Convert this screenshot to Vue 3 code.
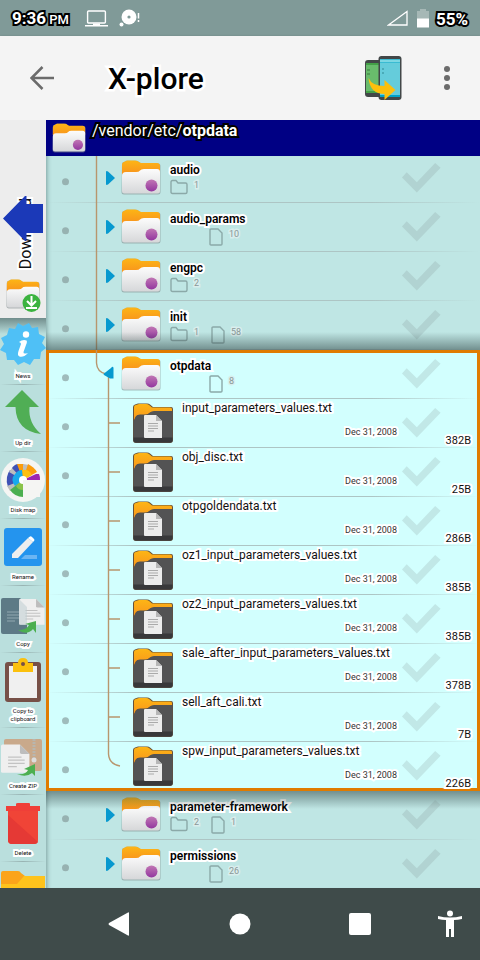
<script setup>
import { reactive } from 'vue'

const before = [
  { name: 'audio', dirs: 1 },
  { name: 'audio_params', files: 10 },
  { name: 'engpc', dirs: 2 },
  { name: 'init', dirs: 1, files: 58 },
]
const current = { name: 'otpdata', files: 8 }
const after = [
  { name: 'parameter-framework', dirs: 2, files: 1 },
  { name: 'permissions', files: 26 },
]
const files = [
  { name: 'input_parameters_values.txt', size: '382B' },
  { name: 'obj_disc.txt', size: '25B' },
  { name: 'otpgoldendata.txt', size: '286B' },
  { name: 'oz1_input_parameters_values.txt', size: '385B' },
  { name: 'oz2_input_parameters_values.txt', size: '385B' },
  { name: 'sale_after_input_parameters_values.txt', size: '378B' },
  { name: 'sell_aft_cali.txt', size: '7B' },
  { name: 'spw_input_parameters_values.txt', size: '226B' },
]
const sections = [
  { key: 'before', rows: before.map((r) => ({ ...r, kind: 'dir', line: true })) },
  {
    key: 'open',
    rows: [
      { ...current, kind: 'dir', open: true },
      ...files.map((f, i) => ({ ...f, kind: 'file', date: 'Dec 31, 2008', last: i === files.length - 1 })),
    ],
  },
  { key: 'after', rows: after.map((r) => ({ ...r, kind: 'dir' })) },
]
const marked = reactive({})
</script>

<template>
  <div class="app">
    <svg class="defs" width="0" height="0" aria-hidden="true">
      <defs>
        <linearGradient id="gOrange" x1="0" y1="0" x2="0" y2="1">
          <stop offset="0" stop-color="#fdb515" /><stop offset="1" stop-color="#f8941d" />
        </linearGradient>
        <linearGradient id="gPaper" x1="0" y1="0" x2="0" y2="1">
          <stop offset="0" stop-color="#fcfcfc" /><stop offset="1" stop-color="#d6d7d9" />
        </linearGradient>
        <linearGradient id="gPurple" x1="0" y1="0" x2="0" y2="1">
          <stop offset="0" stop-color="#c177b4" /><stop offset="1" stop-color="#93369f" />
        </linearGradient>
        <symbol id="folder" viewBox="0 0 40 35">
          <path d="M1 4Q1 2 3 2L5 0.8H15Q17 0.8 18 2L20 3.500H37Q39.500 3.500 39.500 6V32Q39.500 34.500 37 34.500H3Q.5 34.500 .5 32Z" fill="#7c8788" opacity=".55" />
          <path d="M1 5Q1 2 4 1.500L6 .5H14Q17 .5 18 2L20 3H36Q39 3 39 6V14H1Z" fill="url(#gOrange)" />
          <path d="M1 16Q1 12 5 12H15Q18 12 19 10.500Q20 9 23 9H36Q39 9 39 12V31Q39 33.500 36.500 33.500H3.500Q1 33.500 1 31Z" fill="url(#gPaper)" />
        </symbol>
        <symbol id="folder-dot" viewBox="0 0 40 35">
          <use href="#folder" width="40" height="35" />
          <circle cx="30.500" cy="25.500" r="6" fill="url(#gPurple)" />
        </symbol>
        <symbol id="file" viewBox="0 0 40 40">
          <path d="M0 4Q0 2 2 1.500L5 .5H14Q16 .5 17 1.500L20 4H38Q40 4 40 6V37Q40 40 37 40H3Q0 40 0 37Z" fill="#67513a" />
          <path d="M1 4Q1 2 3 2L6 1H13Q15 1 16 2L19 4.500H37Q39 4.500 39 6V9H19Q17 9 15.500 10.500T11 12H6Q3 12 2 15L1 18Z" fill="url(#gOrange)" />
          <path d="M.5 18L3 13.500Q4 11.500 7 11.500H13Q15.500 11.500 17 9.500Q18.500 8 21 8H39.500V37Q39.500 39.500 37 39.500H3Q.5 39.500 .5 37Z" fill="#535354" />
          <path d="M.5 34.500H39.500V37Q39.500 39.500 37 39.500H3Q.5 39.500 .5 37Z" fill="#38383a" />
          <path d="M12 12H23L29 18V35H12Q11 35 11 34V13Q11 12 12 12Z" fill="#ececec" />
          <path d="M23 12L29 18H23Z" fill="#b7b7b7" />
          <path d="M15 20.500H25M15 23H25M15 25.500H25M15 28H21" stroke="#aaa" stroke-width="1" />
        </symbol>
        <symbol id="doc" viewBox="0 0 38 42">
          <path d="M2 0H24L36 12V36H2Q0 36 0 34V2Q0 0 2 0Z" fill="#efefef" />
          <path d="M24 0L36 12H26Q24 12 24 10Z" fill="#bdbdbd" />
          <path d="M9 16H26M9 20H30M9 24H30M9 28H20" stroke="#c3c3c3" stroke-width="1.600" />
        </symbol>
      </defs>
    </svg>

    <header class="status">
      <span class="clock">9:36<small> PM</small></span>
      <svg class="laptop" viewBox="0 0 23 17" aria-hidden="true">
        <rect x="2.600" y="1" width="17.800" height="12" rx="1" fill="none" stroke="#fff" stroke-width="1.400" />
        <path d="M0 15H23V16.500H0ZM8 13.500H15V15H8Z" fill="#fff" />
      </svg>
      <svg class="disc" viewBox="0 0 22 18" aria-hidden="true">
        <circle cx="10" cy="8" r="7.500" fill="#fff" /><circle cx="10" cy="8" r="1.600" fill="#809a98" />
        <circle cx="2.500" cy="15.500" r="2" fill="#fff" />
        <path d="M19.500 4V9.500M19.500 11V13" stroke="#fff" stroke-width="1.500" />
      </svg>
      <span class="grow"></span>
      <svg class="signal" viewBox="0 0 21 16" aria-hidden="true"><path d="M1.500 15L20 1.500V15Z" fill="none" stroke="#fff" stroke-width="1.300" /></svg>
      <svg class="battery" viewBox="0 0 12 19" aria-hidden="true"><path d="M0 2H3V0H9V2H12V10H0Z" fill="#a6b8b6" /><path d="M0 9.500H12V18.500H0Z" fill="#fff" /></svg>
      <span class="percent">55%</span>
    </header>

    <div class="toolbar">
      <button class="plain back" aria-label="Back">
        <svg viewBox="0 0 24 24" width="24" height="24"><path d="M24 12H2M12.500 1L1.500 12L12.500 23" fill="none" stroke="#6b6b6b" stroke-width="2.500" /></svg>
      </button>
      <h1>X-plore</h1>
      <button class="plain" aria-label="Transfer">
        <svg viewBox="0 0 38 45" width="38" height="45">
          <rect x="1" y="4" width="20" height="37" rx="3" fill="#424748" />
          <path d="M2 7H21V37H2Z" fill="#69bc6c" /><path d="M2 7H21V9H2ZM2 35H21V37H2Z" fill="#43a047" />
          <path d="M3 13H6V15H3ZM3 17H6V19H3Z" fill="#519b54" />
          <rect x="14.500" y="0" width="23" height="44" rx="3" fill="#424748" />
          <path d="M16 3H36V41H16Z" fill="#65ccdb" /><path d="M16 3H36V7H16Z" fill="#3abbd2" /><path d="M16 4H36V6H16Z" fill="#7bd7e3" /><path d="M16 39H36V41H16Z" fill="#00a2c8" />
          <path d="M18 12H20V14H18ZM18 16H20V18H18Z" fill="#4aabb8" />
          <path d="M4.500 22Q8 30 20.500 30V24L31.500 34L20.500 44V38Q6 38 4.500 22Z" fill="#fcbf0d" />
        </svg>
      </button>
      <button class="plain more" aria-label="More options">
        <svg viewBox="0 0 6 24" width="6" height="24"><g fill="#6b6b6b"><circle cx="3" cy="3" r="3" /><circle cx="3" cy="12" r="3" /><circle cx="3" cy="21" r="3" /></g></svg>
      </button>
    </div>

    <div class="body">
      <aside class="side">
        <button class="plain tab">
          <span class="tab-label">Download</span>
          <svg class="tab-icon" viewBox="0 0 35 34">
            <use href="#folder" width="34" height="30" />
            <circle cx="25.500" cy="24" r="9" fill="#3bb33f" />
            <path d="M25.500 17V26M21 22L25.500 26.500L30 22M20 29H31" fill="none" stroke="#fff" stroke-width="2" />
          </svg>
          <svg class="arrow" viewBox="0 0 40 45"><path d="M0 22.500L22 0H23.500V8H40V37H23.500V45H22Z" fill="#1b39b8" /></svg>
        </button>
        <nav class="actions">
          <button class="plain action">
            <svg viewBox="0 0 46 46">
              <path d="M23 4L29 1L32 6L38 5L39 12L45 15L42 21L46 26L41 30L40 37L34 37L30 43L24 40L18 43L14 38L7 38L6 31L0 28L4 22L1 16L7 13L9 6L15 7L18 1Z" fill="#4fc0f6" />
              <circle cx="26" cy="12.500" r="3.200" fill="#fff" />
              <path d="M19 20Q23 17 26.500 18.500Q27.500 19.500 26 23L23.500 30Q23 32.500 28 31Q23 36 19.500 34.500Q17 33.500 18.500 29L21 22Q21 20.500 19 20Z" fill="#fff" />
            </svg>
            <span>News</span>
          </button>
          <button class="plain action">
            <svg viewBox="0 0 46 46"><path d="M22 1L39 18H29.500Q28 34 41 45Q16 42 15.500 18H5Z" fill="#50ae55" /></svg>
            <span>Up dir</span>
          </button>
          <button class="plain action">
            <svg viewBox="0 0 46 46">
              <circle cx="23" cy="24" r="22" fill="#f5f5f3" />
              <g transform="translate(0 1)">
                <path d="M23 23L7 20A16 16 0 0 1 10 13Z" fill="#3f51b5" /><path d="M23 23L9 15L13 10Z" fill="#bdbdbd" />
                <path d="M23 23L12 11Q15 7 18 7Z" fill="#3f51b5" /><path d="M23 23L17 7H24Z" fill="#fb9c0c" /><path d="M23 23L23 7L29 8Z" fill="#bdbdbd" />
                <path d="M23 23L28 7Q34 10 37 15Z" fill="#fb9c0c" /><path d="M23 23L36 17H39Q40 19 40 23Z" fill="#9c27b0" />
                <path d="M23 23L22 13Q29 12 32 18Z" fill="#fdc010" />
                <path d="M14 20L7 20Q6 25 8 30L15 26Z" fill="#3f51b5" /><path d="M23 23L7 29L10 34Z" fill="#bdbdbd" />
                <path d="M23 23L15 29Q10 22 15 17Q18 13 22 13Z" fill="#18a9ec" />
                <path d="M23 23L10 33Q15 40 23 40Z" fill="#4caf50" /><path d="M23 23L16 29Q18 33 23 33Z" fill="#8bc34a" />
                <circle cx="23" cy="23" r="4" fill="#fff" /><path d="M23 23H40V40H23Z" fill="#f5f5f3" />
              </g>
            </svg>
            <span>Disk map</span>
          </button>
          <button class="plain action">
            <svg viewBox="0 0 46 46">
              <rect x="4" y="5" width="38" height="38" rx="3" fill="#2494ee" />
              <path d="M12 31L28 15L33 19L18 35H12Z" fill="#eee" /><path d="M28 15L30 13.500Q31 13 32 14L34 16Q35 17 34 18L33 19Z" fill="#fff" />
              <path d="M25 32H37V36H21Z" fill="#6bb5f3" />
            </svg>
            <span>Rename</span>
          </button>
          <button class="plain action">
            <svg viewBox="0 0 46 46">
              <path d="M3 8H20L27 15V44H3Q1 44 1 42V10Q1 8 3 8Z" fill="#5d7a86" />
              <path d="M7 22H22M7 25H22M7 28H22M7 31H15" stroke="#91a7af" stroke-width="1.200" />
              <use href="#doc" x="19" y="3" width="27" height="42" /><path d="M19 9L27 17V35H19Z" fill="#bccbcf" opacity=".5" />
              <path d="M18 40Q27 40 29 35L25 34L36 31V43L33 39Q27 46 18 40Z" fill="#4caf50" />
            </svg>
            <span>Copy</span>
          </button>
          <button class="plain action">
            <svg viewBox="0 0 46 46">
              <rect x="5" y="5" width="36" height="40" rx="3" fill="#775047" /><path d="M9 9H37V41H9Z" fill="#f0f0f0" />
              <path d="M13 6H18Q18 1 23 1T28 6H33V15H13Z" fill="#fbc00d" /><circle cx="23" cy="7" r="2" fill="#775047" />
            </svg>
            <span>Copy to<br />clipboard</span>
          </button>
          <button class="plain action">
            <svg viewBox="0 0 46 46">
              <rect x="4" y="7" width="38" height="32" rx="2" fill="#c9a98b" /><path d="M34 7V26" stroke="#b9b6ae" stroke-width="3" stroke-dasharray="2 1" /><circle cx="34" cy="28" r="2.500" fill="#ddd" />
              <use href="#doc" x="1" y="9" width="30" height="40" />
              <path d="M17 42Q26 43 28 38L24 37L35 32V44L32 41Q26 46 17 42Z" fill="#4caf50" />
            </svg>
            <span>Create ZIP</span>
          </button>
          <button class="plain action">
            <svg viewBox="0 0 46 46"><path d="M8 12H38V41Q38 45 34 45H12Q8 45 8 41Z" fill="#f04437" /><path d="M8 16L38 43Q37 45 34 45H12Q8 45 8 41Z" fill="#e53935" /><path d="M6 7H16V5Q16 4 18 4H29Q30 4 30 5V7H40V12H6Z" fill="#ef3f38" /></svg>
            <span>Delete</span>
          </button>
          <button class="plain action" aria-label="New folder">
            <svg viewBox="0 0 46 46"><path d="M1 7Q1 5 3 5H18Q20 5 21 7L25 10V30H1Z" fill="#fba41a" /><path d="M1 18H17L24 10H45V40H1Z" fill="#fec31c" /></svg>
          </button>
        </nav>
      </aside>

      <main class="pane">
        <div class="path">
          <svg class="path-icon"><use href="#folder-dot" width="34" height="30" /></svg>
          <span>/vendor/etc/<b>otpdata</b></span>
        </div>
        <div class="list">
          <div v-for="s in sections" :key="s.key" class="section" :class="s.key">
            <div v-for="r in s.rows" :key="r.name" class="row" :class="r.kind">
              <svg class="tree" aria-hidden="true">
                <circle cx="19.500" cy="27.700" r="3.500" fill="#7d8f8f" opacity=".6" />
                <path v-if="r.line" d="M50.500 0V49" class="branch" />
                <path v-if="r.open" d="M50.500 0V13Q51 22 60 24M62.500 26V49" class="branch" />
                <path v-if="r.kind === 'file'" :d="r.last ? 'M62.500 0V12Q63 22 74 24' : 'M62.500 0V49M63 24H74'" class="branch" />
                <path v-if="r.open" d="M65 18Q67 15.500 67.500 18V28.500H64L58 25Q57 24 58 23.500Z" class="knob" />
                <path v-else-if="r.kind === 'dir'" d="M60 18Q60 16.500 62 17.500L69 24L62 30.500Q60 31.500 60 30Z" class="knob" />
              </svg>
              <svg class="icon" aria-hidden="true">
                <use v-if="r.kind === 'dir'" href="#folder-dot" width="40" height="35" />
                <use v-else href="#file" width="40" height="40" />
              </svg>
              <div class="info">
                <span class="name">{{ r.name }}</span>
                <span v-if="r.kind === 'file'" class="date">{{ r.date }}</span>
                <span v-else class="counts">
                  <span class="dirs" :class="{ filled: r.dirs }">
                    <template v-if="r.dirs">
                      <svg class="mini-dir" viewBox="0 0 18 16"><path d="M1 3Q1 1.500 2.500 1.500H6L8 4H15.500Q17 4 17 5.500V13Q17 14.500 15.500 14.500H2.500Q1 14.500 1 13Z" /></svg>{{ r.dirs }}
                    </template>
                  </span>
                  <span v-if="r.files" class="docs">
                    <svg class="mini-doc" viewBox="0 0 14 18"><path d="M1 2Q1 1 2 1H9L13 5V16Q13 17 12 17H2Q1 17 1 16Z" /></svg>{{ r.files }}
                  </span>
                </span>
              </div>
              <input v-model="marked[r.name]" type="checkbox" class="check" :aria-label="r.name" />
              <span class="size">{{ r.size }}</span>
            </div>
          </div>
        </div>
      </main>
    </div>

    <footer class="nav">
      <button class="plain nav-back" aria-label="Back"><svg viewBox="0 0 26 26" width="26" height="26"><path d="M22 2V24Q22 25 21 24.500L2 14Q1 13 2 12L21 1.500Q22 1 22 2Z" fill="#fff" /></svg></button>
      <button class="plain" aria-label="Home"><svg viewBox="0 0 24 24" width="24" height="24"><circle cx="12" cy="12" r="10.500" fill="#fff" /></svg></button>
      <button class="plain" aria-label="Recent apps"><svg viewBox="0 0 24 24" width="24" height="24"><rect x="1" y="1" width="22" height="22" rx="2" fill="#fff" /></svg></button>
      <button class="plain" aria-label="Accessibility"><svg viewBox="0 0 24 28" width="24" height="28"><circle cx="12" cy="3.500" r="3" fill="#fff" /><path d="M0 6Q12 9 24 6V9Q20 10 16 10V27H13V19H11V27H8V10Q4 10 0 9Z" fill="#fff" /></svg></button>
    </footer>
  </div>
</template>

<style>
body { margin: 0; background: #3f4b4a; }
</style>

<style scoped>
* { box-sizing: border-box; }
.app { display: flex; flex-direction: column; height: 100vh; font-family: Roboto, "Liberation Sans", sans-serif; color: #111; overflow: hidden; }
.defs { position: absolute; }
.plain { border: 0; padding: 0; margin: 0; background: none; font: inherit; color: inherit; display: flex; align-items: center; justify-content: center; cursor: pointer; }
.grow { flex: 1; }

.status { flex: none; height: 36px; padding: 0 12px; display: flex; align-items: center; background: #809a98; color: #fff; font-size: 17px; line-height: 22px; font-weight: 700; -webkit-text-stroke: 4px #000; paint-order: stroke fill; }
.status span { padding-top: 1px; }
.clock small { font-size: 13px; font-weight: 500; }
.laptop { width: 23px; height: 17px; margin-left: 16px; }
.disc { width: 22px; height: 18px; margin-left: 11px; }
.signal { width: 21px; height: 16px; }
.battery { width: 12px; height: 19px; margin: 0 7px 0 9px; }

.toolbar { flex: none; height: 84px; padding: 0 30px; display: flex; align-items: center; background: #f4f4f4; position: relative; box-shadow: 0 1px 3px rgba(0, 0, 0, .25); }
h1 { flex: 1; margin: 2px 0 0 54px; font-size: 30px; line-height: 36px; font-weight: 500; color: #000; -webkit-text-stroke: 5px #fff; paint-order: stroke fill; }
.more { margin-left: 42px; }

.body { flex: 1; min-height: 0; display: flex; position: relative; }
.side { width: 46px; flex: none; display: flex; flex-direction: column; background: #badfdd; overflow: hidden; }
.tab { position: relative; flex: none; width: 100%; height: 198px; flex-direction: column; justify-content: flex-end; gap: 10px; padding-bottom: 5px; background: #ededed; }
.tab-label { writing-mode: vertical-rl; transform: rotate(180deg); font-size: 16px; line-height: 20px; margin-left: 6px; -webkit-text-stroke: 4px #fff; paint-order: stroke fill; }
.tab-icon { width: 35px; height: 34px; }
.arrow { position: absolute; left: 3px; top: 76px; width: 40px; height: 45px; }
.actions { flex: 1; min-height: 0; overflow: hidden; background: linear-gradient(rgba(40, 60, 60, .5), rgba(40, 60, 60, 0)) top / 100% 16px no-repeat; }
.action { width: 100%; flex-direction: column; justify-content: flex-start; min-height: 67px; padding: 4px 0 5px; background: linear-gradient(90deg, transparent, #98b3b2 50%, transparent) bottom / 100% 1px no-repeat; }
.action svg { width: 46px; height: 46px; flex: none; }
.action span { margin-top: 4px; font-size: 6px; line-height: 8px; font-weight: 400; text-align: center; -webkit-text-stroke: 4px #fff; paint-order: stroke fill; }

.pane { flex: 1; min-width: 0; display: flex; flex-direction: column; background: #bfe6e4; }
.path { flex: none; height: 36px; padding: 0 6px; display: flex; gap: 6px; align-items: flex-start; background: #000084; color: #fff; font-size: 16px; line-height: 22px; -webkit-text-stroke: 4px #000; paint-order: stroke fill; }
.path-icon { width: 34px; height: 30px; margin-top: 3px; }
.list { flex: 1; min-height: 0; overflow: hidden; box-shadow: inset 5px 0 4px -4px rgba(60, 90, 90, .5); }
.before { margin-top: -2px; }
.section.open { position: relative; background: #d2fffe; box-shadow: inset 0 0 0 3px #e07b00; }
.open::before, .open::after { content: ""; position: absolute; left: 0; right: 0; height: 18px; pointer-events: none; }
.open::before { bottom: 100%; background: linear-gradient(rgba(50, 72, 72, 0), rgba(50, 72, 72, .55)); }
.open::after { top: 100%; background: linear-gradient(rgba(50, 72, 72, .55), rgba(50, 72, 72, 0)); }
.row { display: flex; height: 49px; background: linear-gradient(90deg, transparent, #adc5c4 20%, #adc5c4 75%, transparent) bottom / 100% 1px no-repeat; }
.open .row:last-child { background: none; }
.tree { flex: none; width: 75px; height: 49px; }
.branch { fill: none; stroke: #b8966e; stroke-width: 1.400; }
.knob { fill: #0799cf; }
.icon { flex: none; width: 40px; height: 40px; margin-top: 6px; }
.info { flex: 1; min-width: 0; display: flex; flex-direction: column; padding: 8px 5px 0 9px; }
.name { font-size: 12px; line-height: 16px; font-weight: 600; color: #000; white-space: nowrap; }
.name, .date, .size { -webkit-text-stroke: 4px #fff; paint-order: stroke fill; }
.counts { display: flex; font-size: 9px; line-height: 14px; color: #8a9797; -webkit-text-stroke: 3px #d9eeed; paint-order: stroke fill; }
.dirs, .docs { display: flex; gap: 6px; }
.dirs { width: 39px; }
.dirs.filled { width: 41px; }
.mini-dir, .mini-doc { fill: none; stroke: #8ba9a8; stroke-width: 1.400; }
.mini-dir { width: 18px; height: 16px; margin-top: 1px; }
.mini-doc { width: 14px; height: 18px; margin-top: 1px; }
.file .tree { width: 87px; }
.file .icon { margin-top: 4px; }
.file .info { padding-top: 1px; }
.file .name { font-weight: 400; color: #111; }
.date { align-self: flex-end; margin-top: 10px; font-size: 9px; line-height: 12px; color: #333; }
.check { appearance: none; flex: none; width: 39px; height: 30px; margin: 9px 0 0; background: rgba(115, 125, 125, .18); clip-path: polygon(0 48%, 12% 31%, 38% 64%, 85% 0, 99% 16%, 38% 98%); }
.check:checked { background: #0799cf; }
.size { flex: none; width: 39px; padding-right: 9px; align-self: flex-end; text-align: right; font-size: 11px; line-height: 14px; }

.nav { flex: none; height: 72px; display: grid; grid-template-columns: 1fr 2fr 2fr 2fr 1fr; background: #3f4b4a; }
.nav-back { grid-column: 2; }
</style>
